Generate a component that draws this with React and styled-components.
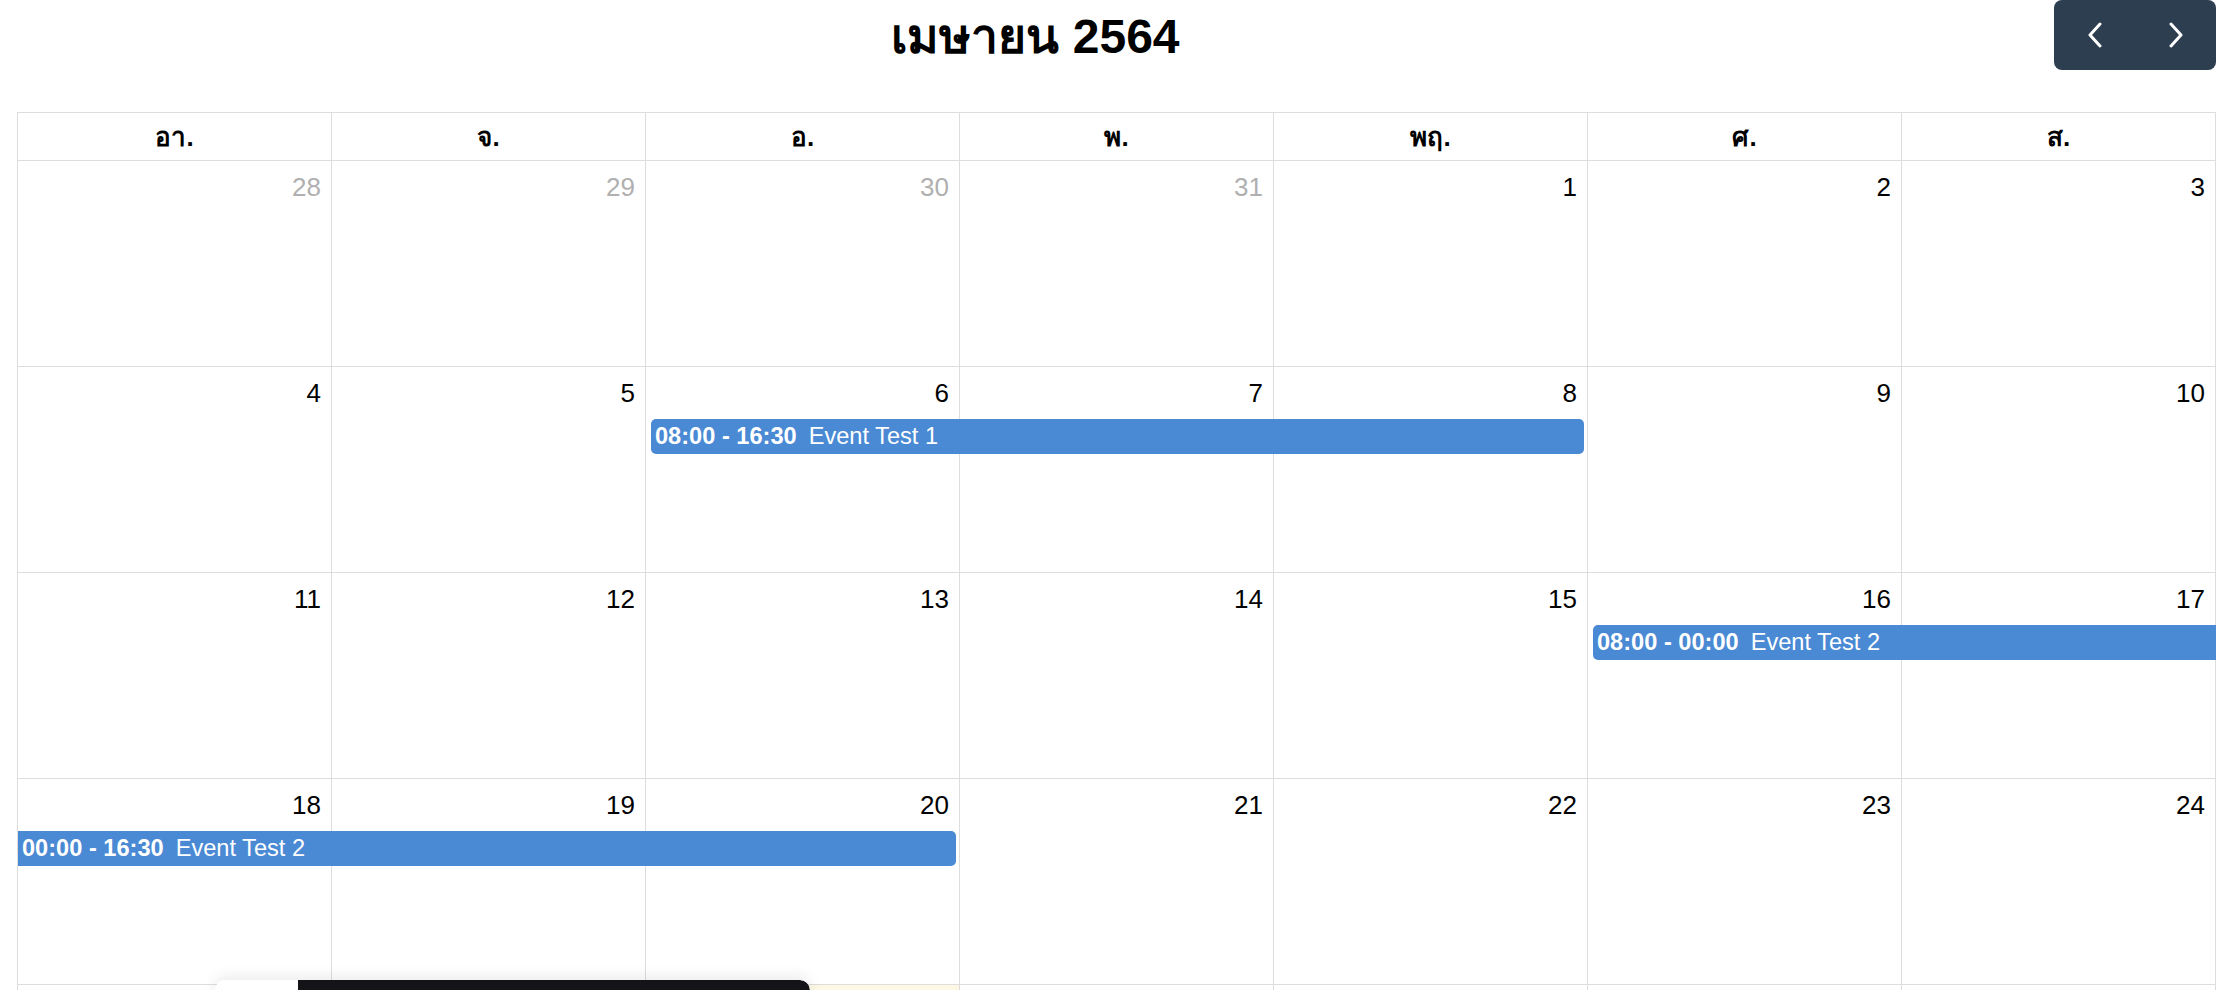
import React from 'react';
import styled, { createGlobalStyle } from 'styled-components';

const GlobalStyle = createGlobalStyle`
  html, body {
    margin: 0;
    padding: 0;
    background: #ffffff;
  }
  body {
    font-family: "Liberation Sans", "Noto Sans", "DejaVu Sans", sans-serif;
    color: #000000;
  }
`;

const dayNames = ['อา.', 'จ.', 'อ.', 'พ.', 'พฤ.', 'ศ.', 'ส.'];

const weeks = [
  {
    days: [
      { n: 28, other: true },
      { n: 29, other: true },
      { n: 30, other: true },
      { n: 31, other: true },
      { n: 1 },
      { n: 2 },
      { n: 3 },
    ],
    events: [],
  },
  {
    days: [4, 5, 6, 7, 8, 9, 10].map((n) => ({ n })),
    events: [
      { start: 3, end: 6, time: '08:00 - 16:30', title: 'Event Test 1', head: true, tail: true },
    ],
  },
  {
    days: [11, 12, 13, 14, 15, 16, 17].map((n) => ({ n })),
    events: [
      { start: 6, end: 8, time: '08:00 - 00:00', title: 'Event Test 2', head: true, tail: false },
    ],
  },
  {
    days: [18, 19, 20, 21, 22, 23, 24].map((n) => ({ n })),
    events: [
      { start: 1, end: 4, time: '00:00 - 16:30', title: 'Event Test 2', head: false, tail: true },
    ],
  },
  {
    days: [
      { n: 25 },
      { n: 26 },
      { n: 27, today: true },
      { n: 28 },
      { n: 29 },
      { n: 30 },
      { n: 1, other: true },
    ],
    events: [],
  },
];

export default function App() {
  return (
    <>
      <GlobalStyle />
      <Page>
        <Toolbar>
          <ToolbarChunk />
          <Title>เมษายน 2564</Title>
          <ButtonGroup>
            <NavButton aria-label="prev">
              <svg width="16" height="26" viewBox="0 0 16 26">
                <polyline points="13,2 3,13 13,24" fill="none" stroke="#fff" strokeWidth="3" strokeLinecap="round" strokeLinejoin="round" />
              </svg>
            </NavButton>
            <NavButton aria-label="next">
              <svg width="16" height="26" viewBox="0 0 16 26">
                <polyline points="3,2 13,13 3,24" fill="none" stroke="#fff" strokeWidth="3" strokeLinecap="round" strokeLinejoin="round" />
              </svg>
            </NavButton>
          </ButtonGroup>
        </Toolbar>

        <Table>
          <HeaderRow>
            {dayNames.map((d) => (
              <HeaderCell key={d}>{d}</HeaderCell>
            ))}
          </HeaderRow>
          {weeks.map((w, wi) => (
            <WeekRow key={wi}>
              {w.days.map((d, di) => (
                <DayCell key={di} $col={di + 1} $today={d.today}>
                  <DayNumber $other={d.other}>{d.n}</DayNumber>
                </DayCell>
              ))}
              {w.events.map((e, ei) => (
                <EventBar key={ei} $start={e.start} $end={e.end} $head={e.head} $tail={e.tail}>
                  <EventTime>{e.time}</EventTime>
                  <EventTitle>{e.title}</EventTitle>
                </EventBar>
              ))}
            </WeekRow>
          ))}
        </Table>
      </Page>

      <FloatingBar>
        <FloatingHandle />
        <FloatingBody />
      </FloatingBar>
    </>
  );
}

const Page = styled.div`
  padding: 0 10px 0 17px;
`;

const Toolbar = styled.div`
  display: flex;
  justify-content: space-between;
  align-items: center;
  height: 70px;
  margin-bottom: 42px;
`;

const ToolbarChunk = styled.div``;

const Title = styled.h2`
  margin: 0;
  font-size: 48px;
  font-weight: 700;
  line-height: 1;
  padding-top: 4px;
`;

const ButtonGroup = styled.div`
  display: flex;
  align-self: flex-start;
  border-radius: 8px;
  overflow: hidden;
`;

const NavButton = styled.button`
  display: flex;
  align-items: center;
  justify-content: center;
  width: 81px;
  height: 70px;
  padding: 0;
  border: none;
  background: #2c3e50;
  cursor: pointer;
`;

const Table = styled.div`
  border-top: 1px solid #dddddd;
  border-left: 1px solid #dddddd;
`;

const HeaderRow = styled.div`
  display: grid;
  grid-template-columns: repeat(7, 1fr);
  height: 47px;
  border-bottom: 1px solid #dddddd;
  box-sizing: content-box;
`;

const HeaderCell = styled.div`
  display: flex;
  align-items: center;
  justify-content: center;
  border-right: 1px solid #dddddd;
  font-size: 26px;
  font-weight: 700;
`;

const WeekRow = styled.div`
  display: grid;
  grid-template-columns: repeat(7, 1fr);
  grid-template-rows: 52px 35px 1fr;
  height: 206px;
  box-sizing: border-box;
  border-bottom: 1px solid #dddddd;
`;

const DayCell = styled.div`
  grid-row: 1 / -1;
  grid-column: ${(p) => p.$col};
  border-right: 1px solid #dddddd;
  background: ${(p) => (p.$today ? '#fcf8e3' : 'transparent')};
  display: flex;
  justify-content: flex-end;
  align-items: flex-start;
`;

const DayNumber = styled.span`
  font-size: 26px;
  line-height: 30px;
  padding: 11px 10px 0 0;
  color: ${(p) => (p.$other ? '#b0b0b0' : '#000000')};
`;

const EventBar = styled.div`
  grid-row: 2;
  grid-column: ${(p) => p.$start} / ${(p) => p.$end};
  margin-left: ${(p) => (p.$head ? '5px' : '0')};
  margin-right: ${(p) => (p.$tail ? '4px' : '0')};
  border-radius: ${(p) => `${p.$head ? '5px' : '0'} ${p.$tail ? '5px' : '0'} ${p.$tail ? '5px' : '0'} ${p.$head ? '5px' : '0'}`};
  background: #4a89d3;
  color: #ffffff;
  display: flex;
  align-items: center;
  gap: 12px;
  padding: 0 4px;
  font-size: 23.6px;
  line-height: 35px;
  white-space: nowrap;
  overflow: hidden;
  z-index: 1;
`;

const EventTime = styled.span`
  font-weight: 700;
`;

const EventTitle = styled.span`
  font-weight: 400;
`;

const FloatingBar = styled.div`
  position: fixed;
  left: 215px;
  top: 980px;
  display: flex;
  height: 40px;
  border-radius: 10px 10px 0 0;
  box-shadow: 0 -4px 14px rgba(0, 0, 0, 0.08);
  overflow: hidden;
  z-index: 5;
`;

const FloatingHandle = styled.div`
  width: 83px;
  background: #ffffff;
`;

const FloatingBody = styled.div`
  width: 512px;
  background: #141418;
  border-radius: 0 10px 0 0;
`;
